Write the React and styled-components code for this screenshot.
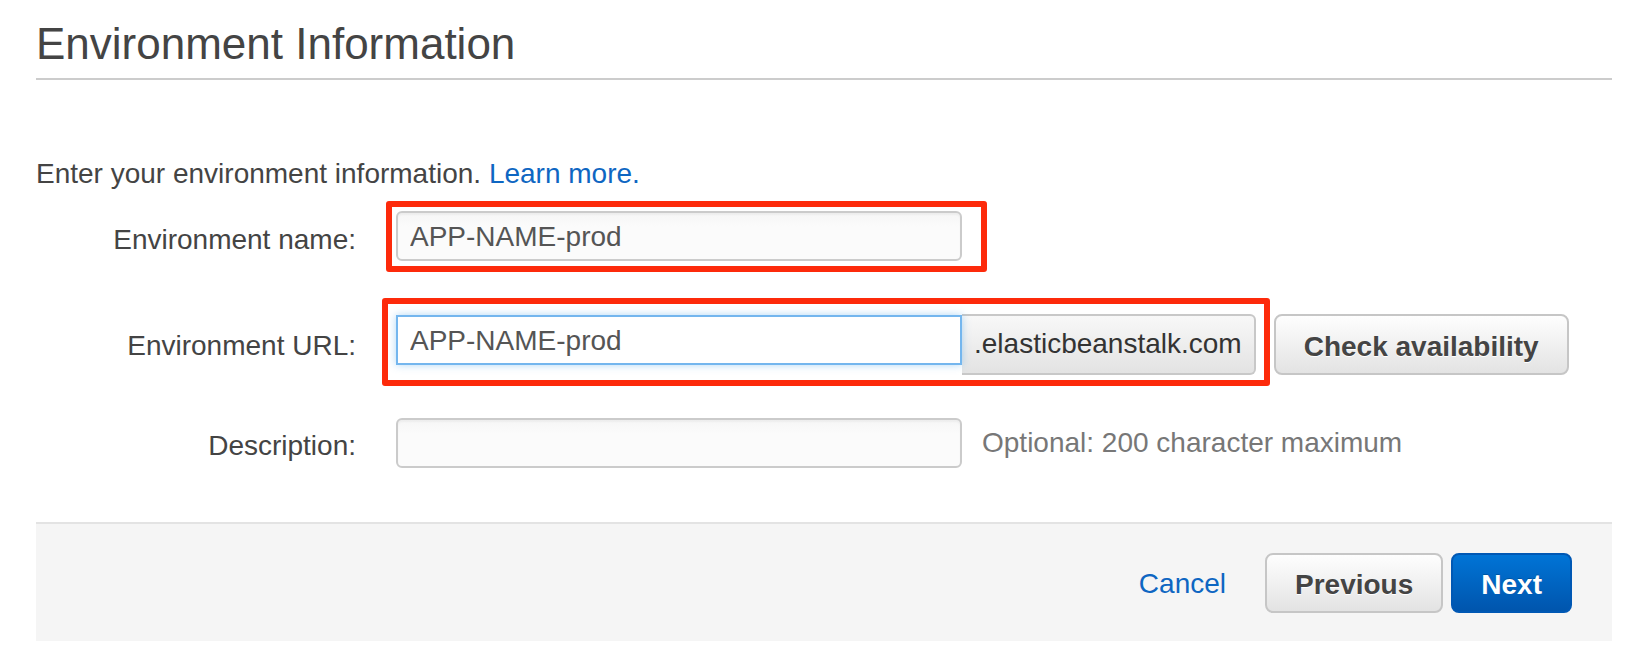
import React from 'react';
import styled, { createGlobalStyle } from 'styled-components';

const GlobalStyle = createGlobalStyle`
  html, body {
    margin: 0;
    padding: 0;
    background: #ffffff;
  }
  body {
    font-family: "Liberation Sans", Arial, Helvetica, sans-serif;
    color: #444444;
  }
`;

const Page = styled.div`
  padding: 19px 24px 0 36px;
`;

const Heading = styled.h1`
  margin: 0;
  font-size: 44px;
  font-weight: normal;
  line-height: 50px;
  color: #444444;
  padding-bottom: 9px;
  border-bottom: 2px solid #cccccc;
`;

const Intro = styled.p`
  margin: 78px 0 0;
  font-size: 28px;
  line-height: 32px;
  color: #444444;
`;

const Link = styled.a`
  color: #0e66c2;
  text-decoration: none;
  cursor: pointer;
`;

const Form = styled.div`
  display: flex;
  flex-direction: column;
  margin-top: 21px;
`;

const Row = styled.div`
  display: grid;
  grid-template-columns: 320px auto;
  column-gap: 40px;
  align-items: center;
  height: ${(p) => p.$height}px;
  margin-top: ${(p) => p.$top || 0}px;
`;

const Label = styled.label`
  font-size: 28px;
  line-height: 32px;
  color: #444444;
  text-align: right;
  padding-top: ${(p) => p.$shift || 0}px;
`;

const Field = styled.div`
  position: relative;
  display: flex;
  align-items: ${(p) => (p.$top ? 'flex-start' : 'center')};
  align-self: stretch;
`;

const TextInput = styled.input`
  box-sizing: border-box;
  width: 566px;
  height: 50px;
  padding: 2px 12px 0;
  font-family: "Liberation Sans", Arial, Helvetica, sans-serif;
  font-size: 28px;
  color: #555555;
  background: ${(p) => (p.$focused ? '#ffffff' : 'linear-gradient(#f6f6f6, #fbfbfb 30%, #fbfbfb)')};
  border: 2px solid ${(p) => (p.$focused ? '#74b6ee' : '#cbcbcb')};
  border-radius: ${(p) => (p.$focused ? '0' : '6px')};
  box-shadow: ${(p) =>
    p.$focused ? '0 0 8px rgba(82, 168, 236, 0.45)' : 'inset 0 2px 2px rgba(0, 0, 0, 0.04)'};
  outline: none;
  margin-top: ${(p) => (p.$focused ? '1px' : '0')};
  position: relative;
  z-index: 1;
`;

const Addon = styled.span`
  box-sizing: border-box;
  height: 61px;
  display: flex;
  align-items: center;
  padding: 0 12px 2px 12px;
  font-size: 28px;
  color: #333333;
  background: linear-gradient(#f8f8f8, #e3e3e3);
  border: 2px solid #c8c8c8;
  border-left: none;
  border-radius: 0 6px 6px 0;
  white-space: nowrap;
`;

const Button = styled.button`
  box-sizing: border-box;
  height: ${(p) => p.$height || 60}px;
  padding: 5px 28px 0;
  font-family: "Liberation Sans", Arial, Helvetica, sans-serif;
  font-size: 28px;
  font-weight: bold;
  border-radius: 8px;
  cursor: pointer;
  color: ${(p) => (p.$primary ? '#ffffff' : '#444444')};
  background: ${(p) =>
    p.$primary ? 'linear-gradient(#0074d6, #0055ad)' : 'linear-gradient(#fefefe, #e3e3e3)'};
  border: 2px solid ${(p) => (p.$primary ? '#0058b4' : '#c6c6c6')};
  text-shadow: ${(p) => (p.$primary ? '0 -1px 0 rgba(0,0,0,0.2)' : '0 1px 0 #ffffff')};
`;

const SideButton = styled(Button)`
  margin-left: 18px;
`;

const Hint = styled.span`
  margin-left: 20px;
  font-size: 28px;
  color: #777777;
`;

// red annotation frame drawn over the field
const Mark = styled.div`
  position: absolute;
  top: ${(p) => p.$t}px;
  left: ${(p) => p.$l}px;
  right: ${(p) => p.$r}px;
  bottom: ${(p) => p.$b}px;
  border: 6px solid #fd2a0b;
  border-radius: 3px;
  pointer-events: none;
  z-index: 2;
`;

const FieldGroup = styled.div`
  position: relative;
  display: flex;
  align-items: flex-start;
`;

const Footer = styled.div`
  margin-top: 54px;
  height: 117px;
  background: #f5f5f5;
  border-top: 2px solid #e3e3e3;
  display: flex;
  justify-content: flex-end;
  align-items: center;
  padding-right: 40px;
`;

const CancelLink = styled(Link)`
  font-size: 28px;
  margin-right: 39px;
  padding-top: 2px;
`;

const Buttons = styled.div`
  display: flex;
  gap: 8px;
`;

export default function App() {
  return (
    <>
      <GlobalStyle />
      <Page>
        <Heading>Environment Information</Heading>
        <Intro>
          Enter your environment information. <Link>Learn more.</Link>
        </Intro>
        <Form>
          <Row $height={50}>
            <Label $shift={8}>Environment name:</Label>
            <Field>
              <FieldGroup>
                <TextInput defaultValue="APP-NAME-prod" />
                <Mark $t={-10} $l={-10} $r={-25} $b={-11} />
              </FieldGroup>
            </Field>
          </Row>
          <Row $height={61} $top={53}>
            <Label $shift={2}>Environment URL:</Label>
            <Field $top>
              <FieldGroup>
                <TextInput $focused defaultValue="APP-NAME-prod" />
                <Addon>.elasticbeanstalk.com</Addon>
                <Mark $t={-16} $l={-14} $r={-14} $b={-11} />
              </FieldGroup>
              <SideButton $height={61}>Check availability</SideButton>
            </Field>
          </Row>
          <Row $height={50} $top={43}>
            <Label $shift={6}>Description:</Label>
            <Field>
              <TextInput defaultValue="" />
              <Hint>Optional: 200 character maximum</Hint>
            </Field>
          </Row>
        </Form>
        <Footer>
          <CancelLink>Cancel</CancelLink>
          <Buttons>
            <Button>Previous</Button>
            <Button $primary>Next</Button>
          </Buttons>
        </Footer>
      </Page>
    </>
  );
}
